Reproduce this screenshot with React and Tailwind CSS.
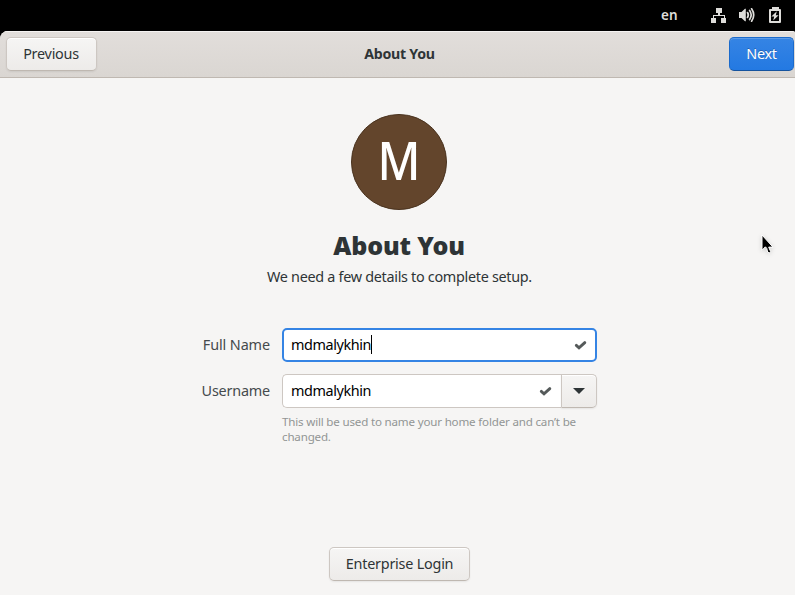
function NetworkIcon() {
  return (
    <svg width="16" height="16" viewBox="0 0 16 16" fill="#deddda" shapeRendering="crispEdges">
      <path d="M5 1h6v5H5zM7 6h2v2H7zM2 8h12v1H2zM2 9h1v2H2zM13 9h1v2h-1zM0 11h5v5H0zM10 11h5v5h-5z" />
    </svg>
  );
}

function VolumeIcon() {
  return (
    <svg width="16" height="16" viewBox="0 0 16 16" fill="none" stroke="#deddda" strokeLinecap="round">
      <path d="M0 5h2.5L6 1.8h.8v12.4H6L2.5 11H0z" fill="#deddda" stroke="none" />
      <path d="M8.5 5.6q1.6 2.4 0 4.8" strokeWidth="1.8" />
      <path d="M10.6 3.5q3.2 4.5 0 9" strokeWidth="1.7" />
      <path d="M12.6 1.8q4.2 6.2 0 12.4" strokeWidth="1.7" />
    </svg>
  );
}

function BatteryIcon() {
  return (
    <svg width="16" height="16" viewBox="0 0 16 16" fill="#deddda">
      <path fillRule="evenodd" d="M5 0h7v2h1q1 0 1 1v12q0 1-1 1H3q-1 0-1-1V3q0-1 1-1h2zM4 4v10h8V4z" />
      <path d="M9.8 4.3 4.4 9.5h2.8l-1 3.9 5.4-5.1H8.8z" />
    </svg>
  );
}

function Check() {
  return (
    <svg width="13" height="11" viewBox="0 0 13 11" fill="none" stroke="#555a5a" strokeWidth="2.9" strokeLinecap="round">
      <path d="M2.3 5.4 5 7.8 10.8 2.6" />
    </svg>
  );
}

function Pointer() {
  return (
    <svg className="absolute left-[761px] top-[234px] drop-shadow-sm" width="14" height="20" viewBox="0 0 14 20">
      <path
        d="M1 1v15.2l3.4-3.4 1.4 1.6.8 3.6 2 .9 1-1.4-1.9-4.4h4.2z"
        fill="#000"
        stroke="#fff"
        strokeWidth="1"
      />
    </svg>
  );
}

const button =
  "flex h-[34px] items-center justify-center rounded-[5px] border border-[#cdc7c2] border-b-[#bfb8b1] bg-gradient-to-b from-[#f6f5f4] to-[#edebe9] shadow-[0_1px_2px_rgba(0,0,0,0.07),inset_0_1px_white]";

export default function App() {
  return (
    <div className="relative h-[595px] w-[795px] overflow-hidden bg-black font-['Noto_Sans',sans-serif] text-[14.4px] text-[#2e3436]">
      <div className="flex h-[31px] w-[795px] items-center pl-[661px] text-[#deddda]">
        <span className="w-[50px] text-[13.5px] font-semibold leading-none">en</span>
        <div className="mb-px flex items-center gap-3">
          <NetworkIcon />
          <VolumeIcon />
          <BatteryIcon />
        </div>
      </div>

      <div className="flex h-[564px] w-[799px] flex-col overflow-hidden rounded-t-[8px] bg-[#f6f5f4]">
        <header className="flex h-[47px] shrink-0 items-center justify-between border-b border-[#bfb8b1] bg-gradient-to-b from-[#e2dedb] to-[#dad6d2] pl-1.5 pr-[5px] shadow-[inset_0_1px_#f5f3f2]">
          <button className={`${button} w-[91px]`}>
            <span className="mr-px tracking-[-0.25px]">Previous</span>
          </button>
          <span className="mr-[27px] text-[14.2px] font-bold leading-5 tracking-[-0.27px]">About You</span>
          <button className="flex h-[34px] w-[65px] items-center justify-center rounded-[5px] border border-[#1b6acb] border-b-[#15539e] bg-gradient-to-b from-[#3584e4] to-[#2379e2] text-white shadow-[inset_0_1px_rgba(255,255,255,0.2)]">
            <span className="tracking-[-0.3px] [text-shadow:0_-1px_rgba(0,0,0,0.25)]">Next</span>
          </button>
        </header>

        <main className="flex flex-1 flex-col items-center">
          <div className="mr-0.5 mt-9 flex size-24 items-center justify-center rounded-full border border-[#4a331f] bg-[#63452c] text-[52px] leading-none text-white">
            <span className="mb-1 scale-x-[0.9] font-medium">M</span>
          </div>
          <h1 className="mr-px mt-[18px] text-[25px] font-black leading-[34px] tracking-[-0.15px]">About You</h1>
          <p className="mt-[5px] whitespace-nowrap text-[14.4px] leading-5 tracking-[-0.3px]">
            We need a few details to complete setup.
          </p>

          <div className="mr-px mt-[41px] grid w-[396px] grid-cols-[69px_315px] gap-x-3 gap-y-3">
            <label className="flex h-[34px] items-center justify-end whitespace-nowrap text-[#454a4c]">
              <span className="tracking-[-0.1px]">Full Name</span>
            </label>
            <div className="flex h-[34px] items-center justify-between rounded-[5px] border-2 border-[#3584e4] bg-white pl-[7px] pr-2 text-black">
              <span className="flex items-center">
                <span className="tracking-[-0.4px]">mdmalykhin</span>
                <span className="h-[19px] w-px bg-black" />
              </span>
              <Check />
            </div>

            <label className="flex h-[34px] items-center justify-end whitespace-nowrap text-[#454a4c]">
              <span className="tracking-[-0.2px]">Username</span>
            </label>
            <div>
              <div className="flex h-[34px]">
                <div className="flex w-[279px] items-center justify-between rounded-l-[5px] border border-r-0 border-[#cdc7c2] bg-white pl-2 pr-[9px] text-black">
                  <span className="tracking-[-0.4px]">mdmalykhin</span>
                  <Check />
                </div>
                <div className={`${button} w-9 rounded-l-none`}>
                  <svg width="12" height="6" viewBox="0 0 12 6">
                    <path d="M0 0h12L6 6z" fill="#2e3436" />
                  </svg>
                </div>
              </div>
              <p className="mt-[6px] whitespace-nowrap text-[11.6px] leading-[15px] tracking-[-0.19px] text-[#929595]">
                This will be used to name your home folder and can’t be
                <br />
                changed.
              </p>
            </div>
          </div>

          <button className={`${button} mb-[14px] mt-auto w-[141px]`}>
            <span className="tracking-[-0.22px]">Enterprise Login</span>
          </button>
        </main>
      </div>
      <Pointer />
    </div>
  );
}
